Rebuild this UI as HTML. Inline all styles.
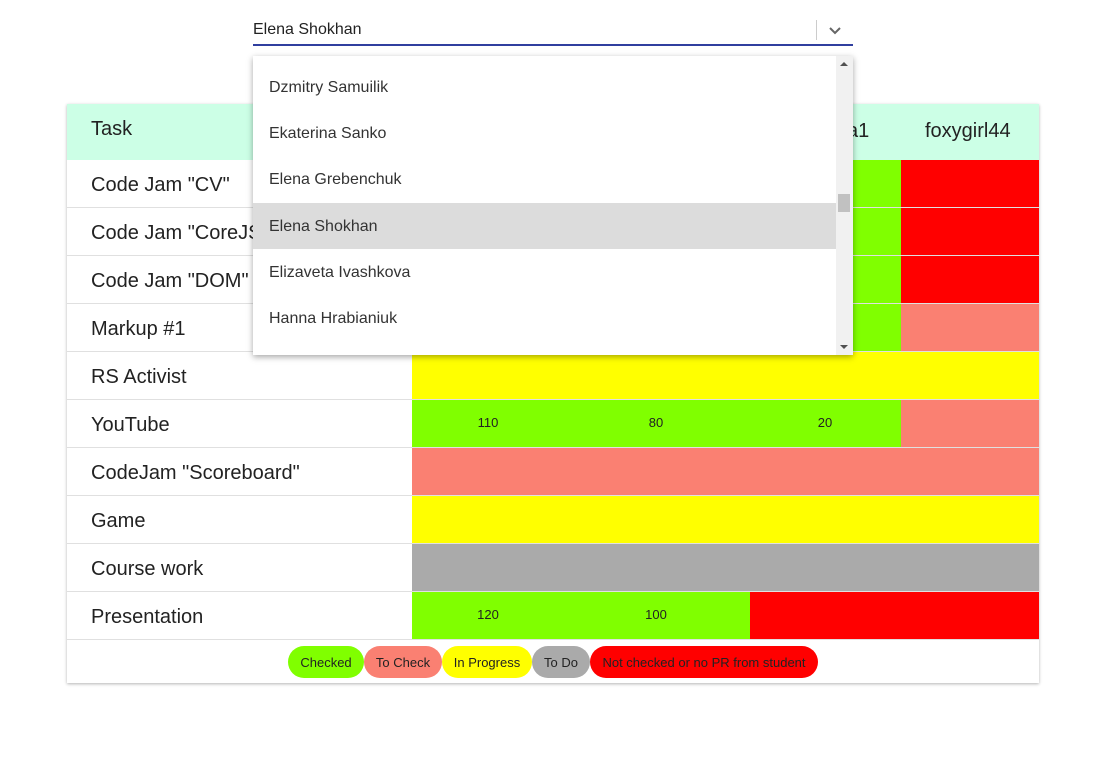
<!DOCTYPE html><html><head><style>
body{margin:0;width:1116px;height:759px;background:#fff;font-family:"Liberation Sans",sans-serif;position:relative;overflow:hidden}
.card{position:absolute;left:67px;top:104px;width:972px;height:579px;box-shadow:0 1px 3px rgba(0,0,0,.3);background:#fff}
.hdr{position:absolute;left:0;top:0;width:972px;height:56px;background:#ccffe6;font-size:20px;color:#222}
.row{position:absolute;left:0;width:972px;height:47px;border-bottom:1px solid #e0e0e0}
.row .t{position:absolute;left:24px;top:14px;font-size:20px;color:#222}
.c{position:absolute;top:0;height:47px;font-size:13px;color:#222;text-align:center;line-height:46px}
.n{position:absolute;top:0;font-size:13px;color:#222;line-height:46px;width:60px;text-align:center}
.pill{position:absolute;top:542px;height:32px;border-radius:16px;font-size:13px;line-height:33px;text-align:center;color:#222}
.menu{position:absolute;left:253px;top:56px;width:600px;height:299px;background:#fff;box-shadow:0 2px 6px rgba(0,0,0,.35)}
.it{position:absolute;left:0;width:583px;height:46px;font-size:16px;color:#333;line-height:48px;padding-left:16px;box-sizing:border-box}
</style></head><body>
<div class="card">
<div class="hdr"><span style="position:absolute;left:24px;top:14px">Task</span><span style="position:absolute;left:780px;top:16px">a1</span><span style="position:absolute;left:858px;top:16px">foxygirl44</span></div>
<div class="row" style="top:56px"><span class="t">Code Jam "CV"</span><div class="c" style="left:345px;width:489px;background:#80ff00"></div><div class="c" style="left:834px;width:138px;background:#f00"></div></div>
<div class="row" style="top:104px"><span class="t">Code Jam "CoreJS"</span><div class="c" style="left:345px;width:489px;background:#80ff00"></div><div class="c" style="left:834px;width:138px;background:#f00"></div></div>
<div class="row" style="top:152px"><span class="t">Code Jam "DOM"</span><div class="c" style="left:345px;width:489px;background:#80ff00"></div><div class="c" style="left:834px;width:138px;background:#f00"></div></div>
<div class="row" style="top:200px"><span class="t">Markup #1</span><div class="c" style="left:345px;width:489px;background:#80ff00"></div><div class="c" style="left:834px;width:138px;background:#fa8072"></div></div>
<div class="row" style="top:248px"><span class="t">RS Activist</span><div class="c" style="left:345px;width:627px;background:#ff0"></div></div>
<div class="row" style="top:296px"><span class="t">YouTube</span><div class="c" style="left:345px;width:489px;background:#80ff00"></div><div class="c" style="left:834px;width:138px;background:#fa8072"></div><span class="n" style="left:391px">110</span><span class="n" style="left:559px">80</span><span class="n" style="left:728px">20</span></div>
<div class="row" style="top:344px"><span class="t">CodeJam "Scoreboard"</span><div class="c" style="left:345px;width:627px;background:#fa8072"></div></div>
<div class="row" style="top:392px"><span class="t">Game</span><div class="c" style="left:345px;width:627px;background:#ff0"></div></div>
<div class="row" style="top:440px"><span class="t">Course work</span><div class="c" style="left:345px;width:627px;background:#aaa"></div></div>
<div class="row" style="top:488px"><span class="t">Presentation</span><div class="c" style="left:345px;width:338px;background:#80ff00"></div><div class="c" style="left:683px;width:289px;background:#f00"></div><span class="n" style="left:391px">120</span><span class="n" style="left:559px">100</span></div>
<div class="pill" style="left:221px;width:76px;background:#80ff00">Checked</div>
<div class="pill" style="left:297px;width:78px;background:#fa8072">To Check</div>
<div class="pill" style="left:375px;width:90px;background:#ff0">In Progress</div>
<div class="pill" style="left:465px;width:58px;background:#aaa">To Do</div>
<div class="pill" style="left:523px;width:228px;background:#f00">Not checked or no PR from student</div>
</div>
<div style="position:absolute;left:253px;top:21px;font-size:16px;color:#222">Elena Shokhan</div>
<div style="position:absolute;left:816px;top:20px;width:1px;height:20px;background:#ccc"></div>
<svg style="position:absolute;left:828px;top:26px" width="14" height="10"><path d="M2 2 L7 7 L12 2" stroke="#666" stroke-width="2" fill="none"/></svg>
<div style="position:absolute;left:253px;top:44px;width:600px;height:2px;background:#303f9f"></div>
<div class="menu">
<div class="it" style="top:8px">Dzmitry Samuilik</div>
<div class="it" style="top:54px">Ekaterina Sanko</div>
<div class="it" style="top:100px">Elena Grebenchuk</div>
<div class="it" style="top:147px;background:#dcdcdc">Elena Shokhan</div>
<div class="it" style="top:193px">Elizaveta Ivashkova</div>
<div class="it" style="top:239px">Hanna Hrabianiuk</div>
<div style="position:absolute;left:583px;top:0;width:17px;height:299px;background:#f1f1f1"></div>
<div style="position:absolute;left:585px;top:138px;width:12px;height:18px;background:#c1c1c1"></div>
<svg style="position:absolute;left:587px;top:5px" width="8" height="6"><path d="M0 5 L4 1 L8 5Z" fill="#505050"/></svg>
<svg style="position:absolute;left:587px;top:288px" width="8" height="6"><path d="M0 1 L4 5 L8 1Z" fill="#505050"/></svg>
</div>
</body></html>
